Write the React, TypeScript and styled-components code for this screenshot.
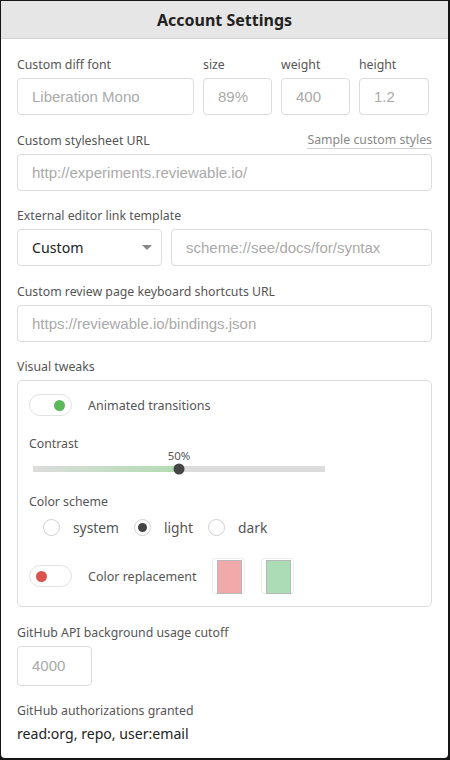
import styled, { createGlobalStyle } from "styled-components";

const Global = createGlobalStyle`
  html, body {
    margin: 0;
    padding: 0;
    background: #fff;
  }
  * { box-sizing: border-box; }
`;

const Frame = styled.div`
  width: 450px;
  height: 760px;
  background: #151515;
  padding: 1px 2px 2px 1px;
`;

const Panel = styled.div`
  height: 100%;
  background: #fff;
  border-radius: 0 0 4px 4px;
  display: flex;
  flex-direction: column;
  font-family: "Noto Sans", "Open Sans", sans-serif;
  color: #555;
`;

const Header = styled.div`
  height: 38px;
  flex-shrink: 0;
  background: #e6e6e6;
  border-bottom: 1px solid #d4d4d4;
  display: flex;
  align-items: center;
  justify-content: center;
  font-size: 16px;
  font-weight: 700;
  color: #222;
`;

const Body = styled.div`
  padding: 16px 16px 0 16px;
  display: flex;
  flex-direction: column;
  gap: 15.5px;
`;

const Section = styled.div`
  display: flex;
  flex-direction: column;
  gap: 4px;
`;

const Row = styled.div`
  display: flex;
  gap: 9px;
`;

const Col = styled.div<{ $w: number }>`
  display: flex;
  flex-direction: column;
  gap: 4px;
  width: ${(p) => p.$w}px;
  flex: none;
`;

const LabelLine = styled.div`
  display: flex;
  justify-content: space-between;
  align-items: center;
  height: 19px;
  padding-top: 1px;
`;

const Label = styled.span`
  font-size: 12.3px;
  line-height: 18px;
  color: #555;
`;

const SampleLink = styled.a`
  font-size: 12.3px;
  line-height: 16px;
  color: #888;
  text-decoration: none;
  border-bottom: 1px solid #d0d0d0;
`;

const Input = styled.input<{ $w?: number; $h?: number }>`
  width: ${(p) => (p.$w ? `${p.$w}px` : "100%")};
  height: ${(p) => p.$h ?? 37}px;
  border: 1px solid #dcdcdc;
  border-radius: 4px;
  padding: 0 14px;
  font-family: "Liberation Sans", Arial, sans-serif;
  font-size: 15px;
  color: #333;
  background: #fff;
  outline: none;
  &::placeholder {
    color: #aaa;
  }
`;

const Select = styled.div`
  width: 145px;
  flex: none;
  height: 37px;
  border: 1px solid #dcdcdc;
  border-radius: 4px;
  padding: 0 9px 0 14px;
  display: flex;
  align-items: center;
  justify-content: space-between;
  font-size: 14.2px;
  color: #222;
`;

const Caret = styled.span`
  width: 0;
  height: 0;
  border-left: 5px solid transparent;
  border-right: 5px solid transparent;
  border-top: 5px solid #888;
`;

const Fieldset = styled.div`
  border: 1px solid #dcdcdc;
  border-radius: 5px;
  padding: 13px 11px 12px 11px;
  display: flex;
  flex-direction: column;
`;

const ToggleRow = styled.div<{ $mt?: number }>`
  display: flex;
  align-items: center;
  gap: 16px;
  margin-top: ${(p) => p.$mt ?? 0}px;
`;

const Toggle = styled.div<{ $on: boolean }>`
  width: 43px;
  height: 22px;
  border: 1px solid #e2e2e2;
  border-radius: 11px;
  display: flex;
  align-items: center;
  justify-content: ${(p) => (p.$on ? "flex-end" : "flex-start")};
  padding: 0 6px;
  &::after {
    content: "";
    width: 11px;
    height: 11px;
    border-radius: 50%;
    background: ${(p) => (p.$on ? "#5cb85c" : "#d9534f")};
  }
`;

const ToggleText = styled.span`
  font-size: 12.5px;
  color: #555;
`;

const SubLabel = styled.div<{ $mt: number }>`
  font-size: 12.3px;
  line-height: 18px;
  margin-top: ${(p) => p.$mt}px;
`;

const SliderWrap = styled.div`
  width: 292px;
  margin: -4px 0 0 4px;
  padding-top: 17px;
  position: relative;
  height: 44px;
`;

const SliderValue = styled.span`
  position: absolute;
  top: 0;
  transform: translateX(-50%);
  font-size: 11.5px;
  color: #555;
  line-height: 14px;
`;

const Track = styled.div`
  position: relative;
  height: 6px;
  background: #dcdcdc;
`;

const Fill = styled.div`
  height: 100%;
  background: linear-gradient(to right, rgba(180, 222, 180, 0), #b2dcb2);
`;

const Thumb = styled.div`
  position: absolute;
  top: 50%;
  width: 11px;
  height: 11px;
  border-radius: 50%;
  background: #464646;
  transform: translate(-50%, -50%);
`;

const RadioRow = styled.div`
  display: flex;
  align-items: center;
  margin-top: 7px;
  padding-left: 14px;
`;

const RadioItem = styled.label`
  display: flex;
  align-items: center;
  gap: 13px;
  margin-right: 15px;
  font-size: 13.8px;
  color: #555;
`;

const RadioDot = styled.span<{ $checked: boolean }>`
  width: 17px;
  height: 17px;
  border-radius: 50%;
  border: 1px solid #cfcfcf;
  display: flex;
  align-items: center;
  justify-content: center;
  &::after {
    content: "";
    width: 9px;
    height: 9px;
    border-radius: 50%;
    background: ${(p) => (p.$checked ? "#444" : "transparent")};
  }
`;

const Swatch = styled.div<{ $color: string }>`
  width: 33px;
  height: 36px;
  border: 1px solid #ececec;
  border-radius: 3px;
  padding: 1px 4px;
  &::after {
    content: "";
    display: block;
    width: 100%;
    height: 100%;
    background: ${(p) => p.$color};
    border: 1px solid #b8b8b8;
  }
`;

const Swatches = styled.div`
  display: flex;
  gap: 16px;
  margin-left: -1px;
`;

const Granted = styled.div`
  font-size: 14.1px;
  color: #222;
`;

export default function App() {
  const contrast = 50;
  return (
    <>
      <Global />
      <Frame>
        <Panel>
          <Header>Account Settings</Header>
          <Body>
            <Row>
              <Col $w={177}>
                <LabelLine>
                  <Label>Custom diff font</Label>
                </LabelLine>
                <Input placeholder="Liberation Mono" />
              </Col>
              <Col $w={69}>
                <LabelLine>
                  <Label>size</Label>
                </LabelLine>
                <Input placeholder="89%" />
              </Col>
              <Col $w={69}>
                <LabelLine>
                  <Label>weight</Label>
                </LabelLine>
                <Input placeholder="400" />
              </Col>
              <Col $w={70}>
                <LabelLine>
                  <Label>height</Label>
                </LabelLine>
                <Input placeholder="1.2" />
              </Col>
            </Row>

            <Section>
              <LabelLine>
                <Label>Custom stylesheet URL</Label>
                <SampleLink href="#">Sample custom styles</SampleLink>
              </LabelLine>
              <Input placeholder="http://experiments.reviewable.io/" />
            </Section>

            <Section>
              <LabelLine>
                <Label>External editor link template</Label>
              </LabelLine>
              <Row>
                <Select>
                  Custom
                  <Caret />
                </Select>
                <Input placeholder="scheme://see/docs/for/syntax" />
              </Row>
            </Section>

            <Section>
              <LabelLine>
                <Label>Custom review page keyboard shortcuts URL</Label>
              </LabelLine>
              <Input placeholder="https://reviewable.io/bindings.json" />
            </Section>

            <Section>
              <LabelLine>
                <Label>Visual tweaks</Label>
              </LabelLine>
              <Fieldset>
                <ToggleRow>
                  <Toggle $on={true} />
                  <ToggleText>Animated transitions</ToggleText>
                </ToggleRow>
                <SubLabel $mt={19}>Contrast</SubLabel>
                <SliderWrap>
                  <SliderValue style={{ left: `${contrast}%` }}>{contrast}%</SliderValue>
                  <Track>
                    <Fill style={{ width: `${contrast}%` }} />
                    <Thumb style={{ left: `${contrast}%` }} />
                  </Track>
                </SliderWrap>
                <SubLabel $mt={0}>Color scheme</SubLabel>
                <RadioRow>
                  <RadioItem>
                    <RadioDot $checked={false} />
                    system
                  </RadioItem>
                  <RadioItem>
                    <RadioDot $checked={true} />
                    light
                  </RadioItem>
                  <RadioItem>
                    <RadioDot $checked={false} />
                    dark
                  </RadioItem>
                </RadioRow>
                <ToggleRow $mt={21}>
                  <Toggle $on={false} />
                  <ToggleText>Color replacement</ToggleText>
                  <Swatches>
                    <Swatch $color="#f1a9a9" />
                    <Swatch $color="#acdcb5" />
                  </Swatches>
                </ToggleRow>
              </Fieldset>
            </Section>

            <Section>
              <LabelLine>
                <Label>GitHub API background usage cutoff</Label>
              </LabelLine>
              <Input $w={75} $h={40} placeholder="4000" />
            </Section>

            <Section>
              <LabelLine>
                <Label>GitHub authorizations granted</Label>
              </LabelLine>
              <Granted>read:org, repo, user:email</Granted>
            </Section>
          </Body>
        </Panel>
      </Frame>
    </>
  );
}
